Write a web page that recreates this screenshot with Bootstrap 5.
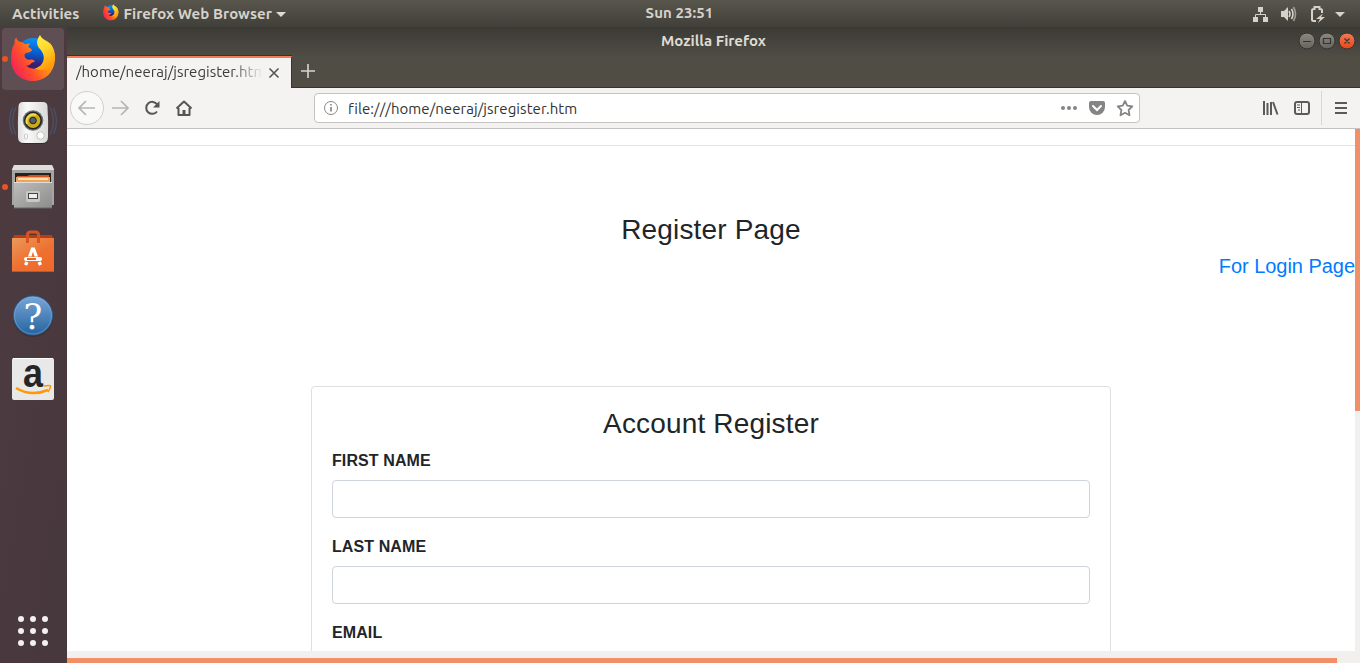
<!DOCTYPE html>
<html lang="en">
<head>
<meta charset="utf-8">
<title>Register Page</title>
<link href="https://cdn.jsdelivr.net/npm/bootstrap@5.3.0/dist/css/bootstrap.min.css" rel="stylesheet">
<style>
html,body{height:100%;overflow:hidden}
body{font-family:"Liberation Sans",Arial,sans-serif;font-size:16px;color:#212529;background:#fff}
.desk{width:1360px;height:663px}
.ui{font-family:Ubuntu,"Noto Sans","Open Sans",sans-serif;white-space:nowrap}
.panel{height:27px;background:linear-gradient(#59564d,#403f39);color:#d6d2ca;font-size:15px;font-weight:600;line-height:26px;display:grid;grid-template-columns:1fr auto 1fr;padding:0 13px 0 12px;letter-spacing:.07px}
.app-menu{width:274px;padding-top:1px}
.panel svg:last-child{margin-right:2px}
.panel .app-menu svg:last-child{margin-right:0}
.dock{width:67px;background:linear-gradient(100deg,#4e3b40,#46383d)}
.tile{width:62px;height:62px;margin:1px 3px 1px 2px;border-radius:4px}
.tile.on{background:#5f4e54}
.dot{width:6px;height:6px;border-radius:50%;background:#e95420;left:0;top:28px}
.apps{margin:auto 0 11px;height:42px}
.titlebar{height:29px;background:linear-gradient(#3b3a35,#4f4c44);color:#dfdbd2;font-size:15px;font-weight:700;line-height:28px;display:grid;grid-template-columns:1fr auto 1fr;padding:0 4px 0 4px}
.tabs{height:32px;background:#504d45;border-bottom:1px solid #35342f}
.tab{width:225px;height:33px;background:#f4f3f2;border-top:2px solid #f27e54;border-right:1px solid #35342f;box-shadow:0 -1px #35342f;padding:0 9px;font-size:15px;color:#3c3c3c}
.tab span{width:187px;overflow:hidden;line-height:28px;margin-top:-4px;-webkit-mask-image:linear-gradient(90deg,#000 83%,transparent)}
.bar{height:41px;background:#f4f3f2;border-bottom:1px solid #c4c3c2}
.url{width:826px;height:30px;border:1px solid #c4c3c2;border-radius:4px;background:#fff;font-size:15px;color:#333;line-height:28px}
.url span{padding-top:1px;letter-spacing:.06px}
.sep{width:1px;height:34px;background:#d8d7d6}
.page{width:1288px;height:522px;overflow:hidden}
.rule{height:17px;border-bottom:1px solid #e3e3e3;margin-bottom:67px}
.heading{font-size:28px;font-weight:400;line-height:33.6px;margin:0 0 8px;letter-spacing:.16px}
.login{display:block;font-size:20px;line-height:22px;padding-bottom:2px;color:#007bff;text-decoration:none;letter-spacing:-.04px}
.account{width:800px;height:400px;margin-top:107px;border-color:#dfdfdf}
.account .card-body{padding:20px}
.form-label{font-weight:700;line-height:24px;padding-top:1px;margin-bottom:7px;display:block;letter-spacing:.1px}
.form-control{border-color:#ced4da;border-radius:4px;height:38px}
.vtrack{width:5px;background:#f1f0ef}
.vthumb{height:282px;background:#f18f68}
.htrack{height:12px;background:#f1f0ef;padding-top:7px}
.hthumb{width:1270px;height:5px;background:#f18f68}
svg{display:block;flex:none}
</style>
</head>
<body>
<svg width="0" height="0" class="position-absolute">
<defs>
<linearGradient id="fo" x1=".95" y1=".2" x2=".1" y2=".7"><stop offset="0" stop-color="#ffb515"/><stop offset=".4" stop-color="#ff8a16"/><stop offset=".72" stop-color="#ff4f2b"/><stop offset="1" stop-color="#f52b50"/></linearGradient>
<linearGradient id="fy" x1="0" y1="0" x2=".4" y2="1"><stop offset="0" stop-color="#fff04d"/><stop offset=".5" stop-color="#ffd92e"/><stop offset="1" stop-color="#ff9d0b"/></linearGradient>
<linearGradient id="fb" x1=".6" y1="0" x2=".5" y2="1"><stop offset="0" stop-color="#0a94f5"/><stop offset=".5" stop-color="#0856c9"/><stop offset=".8" stop-color="#381d70"/></linearGradient>
<symbol id="ff" viewBox="0 0 46 48">
<circle cx="22.500" cy="20" r="16.500" fill="url(#fb)"/>
<path d="M5.700 2.700Q6 6 9.700 7.500Q12 7 14 9.500Q17 9 19.700 9L17.500 12.500Q21 13.500 21.700 16Q19 18 15.500 18.500Q13 20 14.500 23Q17 26 20 25Q23.500 24.500 24.500 27Q21 27.500 19 30.500Q17 31.500 15 31Q20 35 26 34Q33 32 34 23L44.500 22C45 37 35 46.500 22.500 46.500C9 46.500 .5 37 .5 24Q.5 15 4 9Q3.500 5 5.700 2.700Z" fill="url(#fo)"/>
<path d="M29.500 .5C26 5 25.500 10 29 14C34 19 35 26 30 31Q26 34 24 34Q34 38 41 33Q45 27 44.500 20Q43 10 37 7Q31 4 29.500 .5Z" fill="url(#fy)"/>
</symbol>
<linearGradient id="wh" x2="1"><stop stop-color="#dcdcdc"/><stop offset=".3" stop-color="#fafafa"/><stop offset="1" stop-color="#d8d8d5"/></linearGradient>
<linearGradient id="gr" x2="1" y2="1"><stop stop-color="#bdbdbb"/><stop offset="1" stop-color="#8c8c8a"/></linearGradient>
<linearGradient id="bag" x2=".8" y2="1"><stop stop-color="#e99a5c"/><stop offset=".6" stop-color="#ee7030"/><stop offset="1" stop-color="#ee6a2b"/></linearGradient>
<linearGradient id="bl" x2="0" y2="1"><stop stop-color="#79a6d8"/><stop offset="1" stop-color="#25649f"/></linearGradient>
<linearGradient id="btn" x2="0" y2="1"><stop stop-color="#8b8982"/><stop offset="1" stop-color="#64635d"/></linearGradient>
<linearGradient id="cl" x2="0" y2="1"><stop stop-color="#f27b59"/><stop offset="1" stop-color="#e54716"/></linearGradient>
</defs>
</svg>
<div class="desk d-flex flex-column">
  <header class="panel ui">
    <div class="app-menu d-flex align-items-center"><span>Activities</span>
      <svg width="16" height="17" class="ms-auto me-1 mb-1"><use href="#ff"/></svg><span>Firefox Web Browser</span>
      <svg width="10" height="5" class="ms-1"><path d="M0 0H10L5 5Z" fill="#dfdbd2"/></svg></div>
    <span>Sun 23:51</span>
    <div class="d-flex align-items-center justify-content-end">
      <svg width="92" height="20" viewBox="1253 3 92 20" fill="#d6d2ca"><path d="M1258 6h5v5h-5zM1253 16h5v5h-5zM1263 16h5v5h-5z"/><path d="M1260.500 11v3M1255.500 16v-2.500h10V16" fill="none" stroke="#d6d2ca"/>
      <path d="M1281 10h3l4-4v14l-4-4h-3z"/><g fill="none" stroke="#d6d2ca" stroke-width="1.600"><path d="M1289 10q2 3 0 6M1291.500 8q3 5 0 10"/><path d="M1293.500 6q4 7 0 14" opacity=".6"/></g>
      <path d="M1316 20h-2.500q-1.500 0-1.500-1.500v-9q0-1.500 1.500-1.500h1v-2h5v2h1q1.500 0 1.500 1.500V12" fill="none" stroke="#d6d2ca" stroke-width="2"/><path d="M1323 12.500l-7 5.500h4l-2 4 7-6h-4z"/><path d="M1335 11h10l-5 5z"/></svg>
    </div>
  </header>
  <div class="d-flex flex-grow-1">
    <aside class="dock d-flex flex-column">
      <div class="tile on position-relative"><i class="dot position-absolute"></i><svg width="62" height="62"><use href="#ff" x="8.500" y="6.500" width="46" height="48"/></svg></div>
      <div class="tile"><svg width="62" height="62" viewBox="2 92 62 62"><g fill="none" stroke="#4c6082" stroke-width="1.500" opacity=".55"><path d="M16 107q-7 14 0 28M12.500 108q-6 13 0 26M50 107q7 14 0 28M53.500 108q6 13 0 26"/></g><rect x="19" y="104" width="29" height="40" rx="5" fill="#2d2226" opacity=".7"/><path d="M23 102h20q4 0 4.500 4 1 15 .5 31 0 6-6 6H24q-6 0-6-6-.500-16 .500-31 .5-4 4.500-4z" fill="url(#wh)"/><circle cx="33" cy="120.500" r="10.300" fill="#6b7174"/><circle cx="33" cy="120.500" r="8.200" fill="#c9ab1c" stroke="#222" stroke-width="1.600"/><path d="M27 124a7 7 0 0 1 9-9" stroke="#efd956" stroke-width="2" fill="none"/><circle cx="33" cy="120.500" r="3.300" fill="#555d6b" stroke="#222"/><circle cx="40.500" cy="135.500" r="3.700" fill="#fff" stroke="#c3c3c0"/><rect x="24.500" y="134" width="3" height="5" rx="1" fill="none" stroke="#ccc"/></svg></div>
      <div class="tile position-relative"><i class="dot position-absolute"></i><svg width="62" height="62" viewBox="2 156 62 62"><path d="M14 165h38l2 4v36H12v-36z" fill="#a5a5a3"/><path d="M14 165h38l2 5H12z" fill="#dededc"/><path d="M15 173h36v10H15z" fill="#252321"/><path d="M17 176h10l3-1h19v8H17z" fill="#d3541e"/><path d="M16 177h34v6H16z" fill="#eea557"/><path d="M17 176.500h32" stroke="#d3541e"/><path d="M18 179h30" stroke="#fff3d2" stroke-width="1.500"/><path d="M14 182h38v26H14z" fill="url(#gr)"/><path d="M14 182.500h38" stroke="#ddd"/><rect x="26" y="191" width="14" height="11" rx="2" fill="#c8c8c6"/><rect x="28.500" y="193.500" width="9" height="5" fill="#eee" stroke="#444"/><path d="M14 208h38" stroke="#666"/></svg></div>
      <div class="tile"><svg width="62" height="62" viewBox="2 220 62 62"><path d="M14 235h38l2 6H12z" fill="#b93d12"/><path d="M12 238h42v34H12z" fill="url(#bag)"/><path d="M27.500 243v-8q0-3 3-3h5q3 0 3 3v8" fill="none" stroke="#d8531d" stroke-width="3"/><path d="M28 256.500L31.200 247.500h3.600L38 256.500h-3.500l-1.500-5-1.500 5z" fill="#fff"/><rect x="24" y="257" width="18" height="4" rx="2" fill="#fff"/><path d="M27 259h9" stroke="#ec6828" stroke-width="2"/><path d="M25.500 265l1.500-3M40.500 265l-1.500-3" stroke="#fff" stroke-width="3.400"/><path d="M12 271.500h42" stroke="#d15119"/></svg></div>
      <div class="tile"><svg width="62" height="62" viewBox="2 284 62 62"><circle cx="33" cy="317" r="20" fill="#37292e" opacity=".5"/><circle cx="33" cy="315.500" r="19.500" fill="url(#bl)" stroke="#2a5d91"/><circle cx="33" cy="315.500" r="18.500" fill="none" stroke="#8db5df" opacity=".5"/><text x="33" y="329" text-anchor="middle" font-family="DejaVu Serif" font-size="35" fill="#fff">?</text></svg></div>
      <div class="tile"><svg width="62" height="62" viewBox="2 348 62 62"><rect x="12" y="358" width="42" height="42" rx="2" fill="#e8e8e8"/><path d="M13 358.500h40" stroke="#fff"/><text x="33" y="387" text-anchor="middle" font-family="Liberation Sans" font-weight="700" font-size="40" fill="#252525" textLength="20" lengthAdjust="spacingAndGlyphs">a</text><path d="M16 388q15 9 32 2" fill="none" stroke="#ff9900" stroke-width="2.600"/><path d="M44 386q6-1 6.500 0t-2.500 6" fill="none" stroke="#ff9900" stroke-width="1.700"/></svg></div>
      <svg class="apps" width="67" height="42" viewBox="0 610 67 42" fill="#f2f1f0"><circle cx="21" cy="619" r="3"/><circle cx="33" cy="619" r="3"/><circle cx="45" cy="619" r="3"/><circle cx="21" cy="631" r="3"/><circle cx="33" cy="631" r="3"/><circle cx="45" cy="631" r="3"/><circle cx="21" cy="643" r="3"/><circle cx="33" cy="643" r="3"/><circle cx="45" cy="643" r="3"/></svg>
    </aside>
    <main class="d-flex flex-column flex-grow-1">
      <div class="titlebar ui"><i></i><span>Mozilla Firefox</span>
        <svg class="ms-auto" width="58" height="28" viewBox="1298 27 58 28"><g stroke="#35342f"><circle cx="1307" cy="41" r="8" fill="url(#btn)"/><circle cx="1327" cy="41" r="8" fill="url(#btn)"/><circle cx="1347" cy="41" r="8" fill="url(#cl)"/><path d="M1303 41.500h8M1323.500 38.500h7v5h-7zM1344.500 38.500l5 5M1349.500 38.500l-5 5" fill="none" stroke-width="1.200"/></g></svg></div>
      <div class="tabs d-flex ui"><div class="tab d-flex align-items-center"><span>/home/neeraj/jsregister.htm</span><svg width="12" height="12" style="margin-left:5px;margin-top:-2px" viewBox="0 0 12 12"><path d="M1.500 1.500l9 9M10.500 1.500l-9 9" stroke="#555" stroke-width="1.600"/></svg></div>
        <svg width="32" height="31"><path d="M16 8v14M9 15h14" stroke="#d8d5ce" stroke-width="1.600"/></svg></div>
      <div class="bar d-flex align-items-center ui">
        <svg width="247" height="40" viewBox="67 88 247 40" fill="none" stroke="#555" stroke-width="2"><circle cx="87" cy="108" r="16.500" fill="#f9f9f8" stroke="#d0d0cf" stroke-width="1"/><path d="M95 108H80M86 101l-7 7 7 7M112 108h15M121 101l7 7-7 7" stroke="#b5b5b5" stroke-width="1.700"/><path d="M157.200 104.500A6 6 0 1 0 157 111.500"/><path d="M159.500 101v6.500H153z" fill="#555" stroke="none"/><path d="M176.500 108.500l7.500-7 7.500 7M178.500 108v7h11v-7" stroke-linejoin="round"/><path d="M184 115v-5" stroke-width="3"/></svg>
        <div class="url d-flex align-items-center"><svg width="33" height="28" viewBox="315 94 33 28"><circle cx="331" cy="108" r="6.500" fill="none" stroke="#888"/><path d="M331 107v4.500M331 104v1.600" stroke="#777" stroke-width="1.500"/></svg><span>file:///home/neeraj/jsregister.htm</span>
          <svg class="ms-auto" width="79" height="28" viewBox="1060 94 79 28" fill="#858585"><circle cx="1063" cy="108" r="2"/><circle cx="1069" cy="108" r="2"/><circle cx="1075" cy="108" r="2"/><path d="M1091 101h12q2 0 2 2v4a8 8 0 0 1-16 0v-4q0-2 2-2z"/><path d="M1093 106l4 4 4-4" stroke="#fff" stroke-width="2" stroke-linecap="round" fill="none"/><path d="M1125 101l2.200 4.700 5.100.7-3.700 3.600.9 5.200-4.500-2.500-4.500 2.500.9-5.200-3.700-3.600 5.100-.7z" fill="none" stroke="#858585" stroke-width="1.800" stroke-linejoin="round"/></svg></div>
        <svg class="ms-auto" width="60" height="40" viewBox="1261 88 60 40" fill="none" stroke="#5a5a59" stroke-width="2"><path d="M1264 101v14M1267.500 103v12M1271 102v13M1273 102l4.500 12.500"/><rect x="1295" y="102" width="14" height="12" rx="2"/><path d="M1301.500 102v12" stroke-width="1"/><path d="M1297 105h3M1297 107.500h3M1298 110h2" stroke-width="1"/></svg>
        <i class="sep"></i><svg width="38" height="40" viewBox="1322 88 38 40"><path d="M1335 103h12M1335 108h12M1335 113h12" stroke="#5a5a59" stroke-width="2"/></svg>
      </div>
      <div class="d-flex"><section class="page"><div class="rule"></div>
        <h3 class="heading text-center">Register Page</h3>
        <a class="login text-end" href="#">For Login Page</a>
        <div class="card account mx-auto rounded-1"><div class="card-body"><h3 class="heading text-center">Account Register</h3>
          <div class="mb-3"><label class="form-label" for="first">FIRST NAME</label><input class="form-control" id="first"></div>
          <div class="mb-3"><label class="form-label" for="last">LAST NAME</label><input class="form-control" id="last"></div>
          <label class="form-label">EMAIL</label></div></div>
      </section><div class="vtrack"><div class="vthumb"></div></div></div>
      <div class="htrack"><div class="hthumb"></div></div>
    </main>
  </div>
</div>
<script src="https://cdn.jsdelivr.net/npm/bootstrap@5.3.0/dist/js/bootstrap.bundle.min.js"></script>
</body>
</html>
